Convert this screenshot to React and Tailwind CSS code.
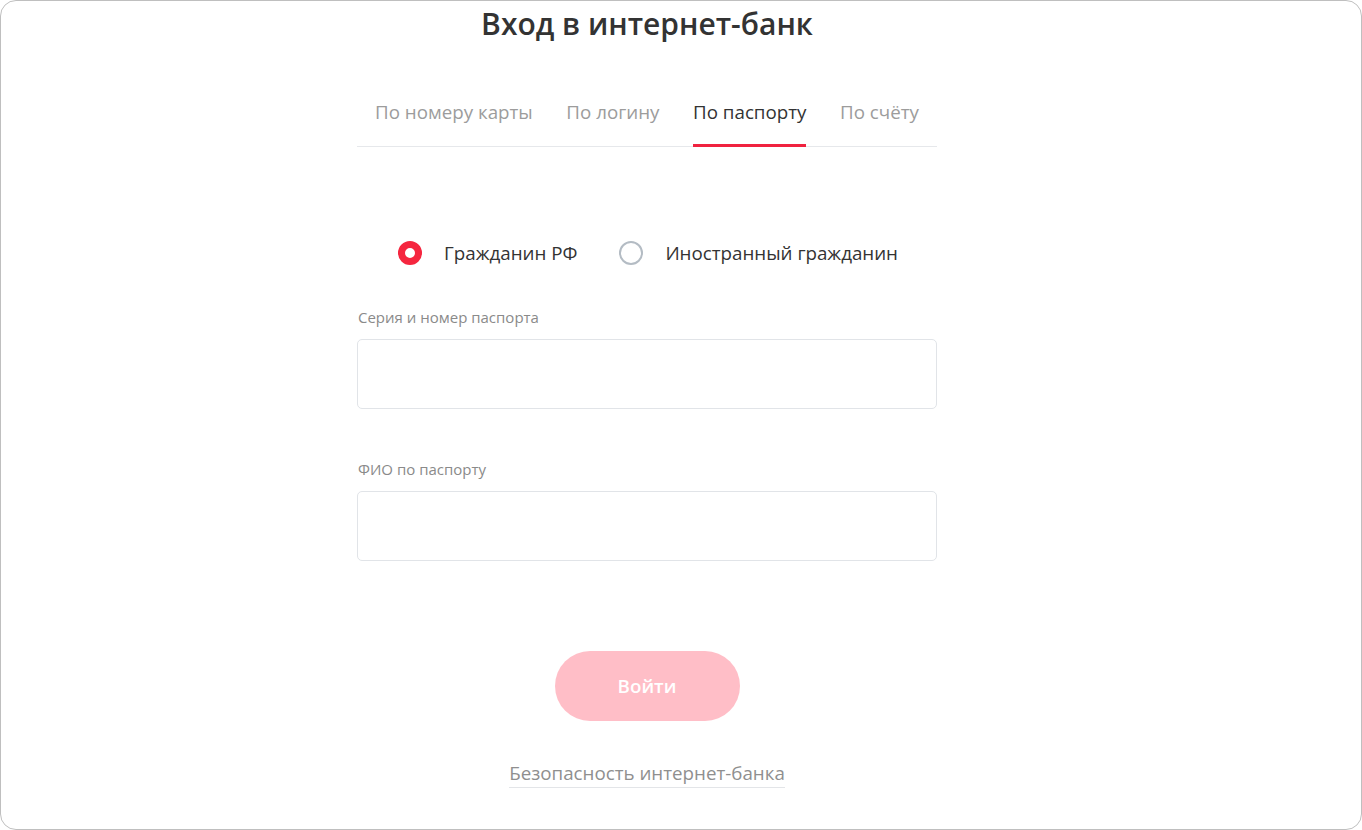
import { useState } from 'react';

const tabs = ['По номеру карты', 'По логину', 'По паспорту', 'По счёту'];

export default function App() {
  const [tab, setTab] = useState('По паспорту');
  const [citizen, setCitizen] = useState('rf');

  return (
    <div className="w-[1362px] h-[830px] bg-white border border-[#bfbfbf] rounded-[16px] overflow-hidden font-['Open_Sans',sans-serif] text-[#333]">
      <div className="w-[580px] ml-[356px] flex flex-col">
        <h1 className="mt-[3px] text-center text-[30px] leading-[40px] font-semibold text-[#333]">
          Вход в интернет-банк
        </h1>

        <div className="mt-[56px] flex justify-between px-[18px] border-b border-[#e6e8eb]">
          {tabs.map(t => (
            <button
              key={t}
              onClick={() => setTab(t)}
              className={`-mb-px pb-[20px] text-[18.75px] leading-6 border-b-[3px] ${
                tab === t ? 'border-[#f0223f] text-[#333]' : 'border-transparent text-[#9c9c9c]'
              }`}
            >
              {t}
            </button>
          ))}
        </div>

        <div className="mt-[94px] flex justify-center items-center gap-[42px] pl-[2px]">
          <label className="flex items-center gap-[22px] cursor-pointer" onClick={() => setCitizen('rf')}>
            <span
              className={`w-6 h-6 rounded-full ${
                citizen === 'rf' ? 'border-[7px] border-[#f5263f]' : 'border-2 border-[#b4bcc4]'
              }`}
            ></span>
            <span className="text-[18.75px] leading-6">Гражданин РФ</span>
          </label>
          <label className="flex items-center gap-[22px] cursor-pointer" onClick={() => setCitizen('foreign')}>
            <span
              className={`w-6 h-6 rounded-full ${
                citizen === 'foreign' ? 'border-[7px] border-[#f5263f]' : 'border-2 border-[#b4bcc4]'
              }`}
            ></span>
            <span className="text-[18.75px] leading-6">Иностранный гражданин</span>
          </label>
        </div>

        <label className="mt-[42px] pl-px text-[15px] leading-5 text-[#8a8a8a]">Серия и номер паспорта</label>
        <input className="mt-[12px] h-[70px] w-full border border-[#e1e4e8] rounded-[5px] px-4 text-[18px] outline-none" />

        <label className="mt-[50px] pl-px text-[15px] leading-5 text-[#8a8a8a]">ФИО по паспорту</label>
        <input className="mt-[12px] h-[70px] w-full border border-[#e1e4e8] rounded-[5px] px-4 text-[18px] outline-none" />

        <button className="mt-[90px] self-center w-[185px] h-[70px] rounded-full bg-[#ffbec7] text-white text-[18.75px] font-semibold">
          Войти
        </button>

        <a href="#" className="mt-[40px] self-center text-[18.75px] leading-6 text-[#8f8f8f] border-b border-[#e3e5e8] pb-[2px]">
          Безопасность интернет-банка
        </a>
      </div>
    </div>
  );
}
